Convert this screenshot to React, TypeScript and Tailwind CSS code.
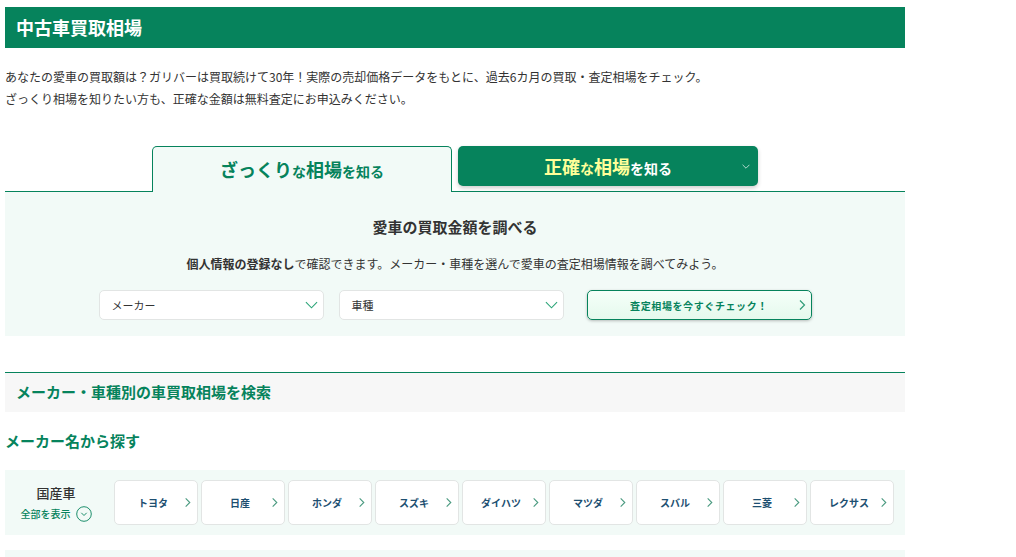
const Chevron = ({ className }: { className: string }) => (
  <svg viewBox="0 0 12 12" fill="none" stroke="currentColor" className={className}>
    <path d="M4 1.5 8.5 6 4 10.5" strokeWidth="1.2" />
  </svg>
);

const Down = ({ className }: { className: string }) => (
  <svg viewBox="0 0 14 8" fill="none" stroke="currentColor" className={className}>
    <path d="M1 1l6 6 6-6" strokeWidth="1.2" />
  </svg>
);

const makers = ["トヨタ", "日産", "ホンダ", "スズキ", "ダイハツ", "マツダ", "スバル", "三菱", "レクサス"];

function Select({ label }: { label: string }) {
  return (
    <div className="flex h-[30px] w-[225px] items-center justify-between rounded-[5px] border border-[#e2e5e4] bg-white pl-3 pr-[4px] text-[11px] text-[#333]">
      <span>{label}</span>
      <Down className="mr-[1px] h-[8px] w-[13px] text-[#2ca578]" />
    </div>
  );
}

export default function App() {
  return (
    <div
      className="h-[557px] w-[1016px] overflow-hidden bg-white pl-[5px] pt-[7px] text-[#333]"
      style={{ fontFamily: '"Noto Sans CJK JP", "Noto Sans", sans-serif' }}
    >
      <div className="w-[900px]">
        <h1 className="flex h-[41px] items-center bg-[#06835c] pl-[11px] text-[18px] font-bold text-white">中古車買取相場</h1>
        <div className="mt-[18px] text-[12px] leading-[22px] text-[#333]">
          <p>あなたの愛車の買取額は？ガリバーは買取続けて30年！実際の売却価格データをもとに、過去6カ月の買取・査定相場をチェック。</p>
          <p>ざっくり相場を知りたい方も、正確な金額は無料査定にお申込みください。</p>
        </div>

        <div className="mt-[36px] flex h-[46px] items-start border-b border-[#06835c] pl-[147px]">
          <div className="flex h-[46px] w-[300px] items-center justify-center rounded-t-[5px] border border-b-0 border-[#06835c] bg-[#f2faf7] font-bold text-[#06835c]">
            <span className="text-[14px]"><span className="text-[18px]">ざっくり</span>な<span className="text-[18px]">相場</span>を知る</span>
          </div>
          <div className="relative ml-[6px] flex h-[40px] w-[300px] items-center justify-center rounded-[5px] bg-[#06835c] font-bold text-white shadow-[0_2px_4px_rgba(0,0,0,0.2)]">
            <span className="text-[14px]"><span className="text-[18px] text-[#ffff99]">正確</span><span className="text-[#ffff99]">な</span><span className="text-[18px] text-[#ffff99]">相場</span>を知る</span>
            <Down className="absolute right-[8px] top-[18px] h-[5px] w-[8px] text-white" />
          </div>
        </div>

        <div className="flex h-[144px] flex-col items-center bg-[#f2faf7] pt-[24px]">
          <h2 className="text-[15px] font-bold leading-[22px] text-[#333]">愛車の買取金額を調べる</h2>
          <p className="mt-[17px] text-[12px] leading-[18px]"><b>個人情報の登録なし</b>で確認できます。メーカー・車種を選んで愛車の査定相場情報を調べてみよう。</p>
          <div className="mt-[17px] flex items-center">
            <Select label="メーカー" />
            <div className="ml-[15px]"><Select label="車種" /></div>
            <div className="relative ml-[23px] flex h-[30px] w-[225px] items-center justify-center rounded-[5px] border border-[#06835c] bg-gradient-to-b from-[#f5fff9] to-[#e5f9ed] text-[10px] font-bold tracking-[0.06em] text-[#06835c] shadow-[0_1px_3px_rgba(0,0,0,0.25)]">
              査定相場を今すぐチェック！
              <Chevron className="absolute right-[3px] top-[8px] h-[12px] w-[12px] text-[#2f9c78]" />
            </div>
          </div>
        </div>

        <h2 className="mt-[36px] flex h-[40px] items-center border-t border-[#06835c] bg-[#f7f7f7] pl-[11px] text-[15px] font-bold text-[#06835c]">メーカー・車種別の車買取相場を検索</h2>
        <h3 className="mt-[18px] text-[15px] font-bold leading-[22px] text-[#06835c]">メーカー名から探す</h3>

        <div className="mt-[18px] flex h-[65px] items-center bg-[#f2faf7] pl-[6px]">
          <div className="flex w-[92px] flex-col items-center pr-[2px]">
            <div className="text-[13px] font-medium leading-[20px] text-[#333]">国産車</div>
            <div className="mt-[3px] flex items-center gap-[5px] text-[10px] font-medium leading-[16px] text-[#06835c]">
              全部を表示
              <svg viewBox="0 0 16 16" fill="none" stroke="currentColor" className="h-[16px] w-[16px]">
                <circle cx="8" cy="8" r="7.3" strokeWidth="0.9" />
                <path d="M5.3 6.8 8 9.5l2.7-2.7" strokeWidth="0.9" />
              </svg>
            </div>
          </div>
          <div className="ml-[11px] flex gap-[3px]">
            {makers.map((m) => (
              <div key={m} className="relative flex h-[45px] w-[84px] items-center justify-center rounded-[5px] border border-[#e2e5e4] bg-white pr-[6px] text-[10px] font-bold text-[#1d4f71]">
                {m}
                <Chevron className="absolute right-[4px] top-[16px] h-[11px] w-[11px] text-[#4b9a80]" />
              </div>
            ))}
          </div>
        </div>

        <div className="mt-[15px] h-[30px] bg-[#f2faf7]" />
      </div>
    </div>
  );
}
